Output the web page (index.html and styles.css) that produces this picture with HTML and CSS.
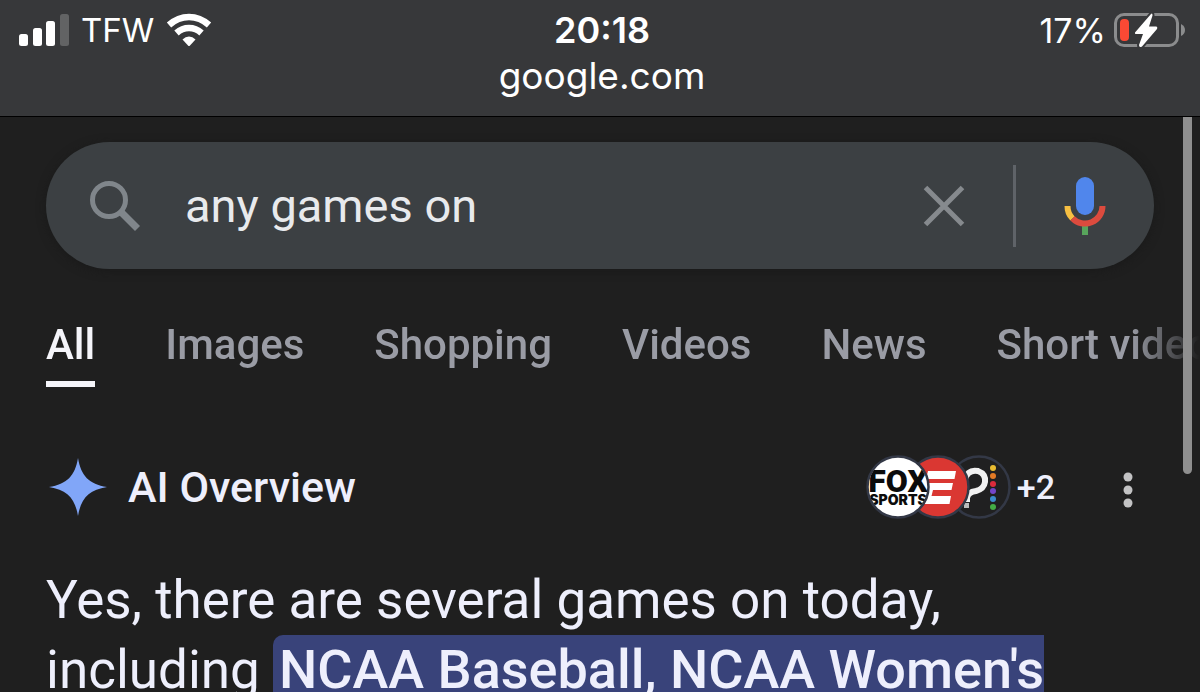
FILE: index.html
```html
<!DOCTYPE html>
<html lang="en">
<head>
<meta charset="utf-8">
<meta name="viewport" content="width=device-width, initial-scale=1">
<title>any games on - Google Search</title>
<link rel="stylesheet" href="styles.css">
</head>
<body>
<header class="browser-bar">
  <div class="status">
    <div class="status-left">
      <svg class="signal" width="50" height="32" viewBox="0 0 50 32" aria-hidden="true">
        <rect x="0" y="20" width="9" height="12" rx="2.5" fill="#fff"/>
        <rect x="14" y="14" width="9" height="18" rx="2.5" fill="#fff"/>
        <rect x="27" y="7" width="9" height="25" rx="2.5" fill="#fff"/>
        <rect x="41" y="0" width="9" height="32" rx="2.5" fill="#626364"/>
      </svg>
      <span class="carrier">TFW</span>
      <svg class="wifi" width="46" height="34" viewBox="0 0 46 34" aria-hidden="true">
        <g fill="none" stroke="#fff" stroke-width="6.500">
          <path d="M3 12Q12 4 23 4t20 8"/>
          <path d="M10.500 20Q16 15 23 15t12.500 5"/>
        </g>
        <path d="M16.500 26.500Q19.500 23.500 23 23.500t6.500 3L24 32.500q-1 1-2 0z" fill="#fff"/>
      </svg>
    </div>
    <time class="clock">20:18</time>
    <div class="status-right">
      <span class="percent">17%</span>
      <svg class="battery" width="71" height="36" viewBox="0 0 71 36" aria-hidden="true">
        <rect x="1.500" y="2.500" width="62" height="31" rx="8.500" fill="none" stroke="#8b8c8d" stroke-width="3"/>
        <rect x="6" y="7" width="9" height="22" rx="4" fill="#fb4934"/>
        <path d="M67 12q4 2 4 6t-4 6z" fill="#8b8c8d"/>
        <path d="M37 2 21 20.500q-.5 1.500 1 1.500h7l-4 11q0 3 3 1.500L43 17q1-2-1-2.500h-7l3.500-11Q38.500.5 37 2z" fill="#fff" stroke="#37383a" stroke-width="4" paint-order="stroke"/>
      </svg>
    </div>
  </div>
  <div class="domain">google.com</div>
</header>
<div class="scrollbar" aria-hidden="true"></div>
<main>
  <form class="search" role="search">
    <svg width="52" height="52" viewBox="0 0 52 52" aria-hidden="true">
      <g fill="none" stroke="#80868b">
        <circle cx="20" cy="20" r="16.500" stroke-width="5"/>
        <path d="M31.500 31.500 48.500 48.500" stroke-width="7"/>
      </g>
    </svg>
    <input class="query" type="text" aria-label="Search" value="any games on">
    <button class="icon-button" type="button" aria-label="Clear">
      <svg width="42" height="42" viewBox="0 0 42 42"><path d="M2.500 2.500l37 37M39.500 2.500l-37 37" stroke="#868a8e" stroke-width="5" fill="none"/></svg>
    </button>
    <span class="divider"></span>
    <button class="icon-button" type="button" aria-label="Search by voice">
      <svg width="42" height="60" viewBox="0 0 42 60">
        <rect x="12" y="1" width="18" height="38" rx="9" fill="#5086ec"/>
        <path d="M18 48h6v11h-6z" fill="#58a55c"/>
        <path d="M3.500 30A17.500 17.500 0 0 0 8.500 42.500" fill="none" stroke="#f6bf42" stroke-width="6"/>
        <path d="M8.500 42.300A17.500 17.500 0 0 0 38.500 30" fill="none" stroke="#dc4b3e" stroke-width="6"/>
      </svg>
    </button>
  </form>
  <nav class="tabs">
    <a class="tab active" href="#">All</a>
    <a class="tab" href="#">Images</a>
    <a class="tab" href="#">Shopping</a>
    <a class="tab" href="#">Videos</a>
    <a class="tab" href="#">News</a>
    <a class="tab" href="#">Short videos</a>
  </nav>
  <section class="overview">
    <div class="overview-head">
      <svg width="62" height="62" viewBox="0 0 62 62" aria-hidden="true">
        <path d="M32 2C35 20 43 28 61 31 43 34 35 42 32 60 29 42 21 34 3 31 21 28 29 20 32 2z" fill="#81a6f8"/>
      </svg>
      <h2 class="title">AI Overview</h2>
      <svg width="146" height="64" viewBox="0 0 146 64" role="img" aria-label="Sources">
        <defs>
          <clipPath id="c1"><circle cx="32" cy="32" r="29.500"/></clipPath>
          <clipPath id="c2"><circle cx="72" cy="32" r="29.500"/></clipPath>
        </defs>
        <circle cx="113" cy="32" r="30.500" fill="#202021" stroke="#333846" stroke-width="2.500"/>
        <path d="M99 24Q102 14 112 16q8 3 7 11-1 7-9 9-8 1-9 7v4" fill="none" stroke="#f1f1f1" stroke-width="6"/>
        <path d="M98 48h5v5h-5z" fill="#bbb"/>
        <circle cx="127" cy="13" r="3" fill="#e8bb31"/>
        <circle cx="127" cy="21" r="3" fill="#e27a25"/>
        <circle cx="127" cy="29" r="3" fill="#dc2b3c"/>
        <circle cx="127" cy="36" r="3" fill="#7445c8"/>
        <circle cx="127" cy="44" r="3" fill="#3c8bcb"/>
        <circle cx="127" cy="52" r="3" fill="#43ad45"/>
        <circle cx="72" cy="32" r="30.500" fill="#da3732" stroke="#333846" stroke-width="2.500"/>
        <g clip-path="url(#c2)" fill="#fff">
          <path d="M62 16h28l-1.500 8H60z"/>
          <path d="M59 28h28l-1.500 7H67l-1.500 6H85l-1.500 8H55z"/>
        </g>
        <circle cx="32" cy="32" r="30.500" fill="#fff" stroke="#333846" stroke-width="2.500"/>
        <g clip-path="url(#c1)" fill="#0b0b0b" text-anchor="middle">
          <text class="fox" x="32" y="37">FOX</text>
          <text class="sports" x="32" y="50">SPORTS</text>
        </g>
      </svg>
      <span class="more-sources">+2</span>
      <button class="icon-button menu" type="button" aria-label="More options">
        <svg width="10" height="36" viewBox="0 0 10 36" fill="#c3c3c4"><circle cx="5" cy="5" r="4.500"/><circle cx="5" cy="18" r="4.500"/><circle cx="5" cy="31" r="4.500"/></svg>
      </button>
    </div>
    <p class="answer">Yes, there are several games on today,<br>including <mark class="highlight">NCAA Baseball, NCAA Women's</mark></p>
  </section>
</main>
</body>
</html>
```
FILE: styles.css
```css
* { box-sizing: border-box; }

body {
  margin: 0;
  height: 100vh;
  overflow: hidden;
  background: #1f1f1f;
  color: #eeeffc;
  font-family: Roboto, "Liberation Sans", sans-serif;
}

.browser-bar {
  padding: 8px 15px 0 19px;
  background: #37383a;
  border-bottom: 1px solid #000;
  color: #fff;
  font-family: Inter, "Liberation Sans", sans-serif;
}

.status {
  display: grid;
  grid-template-columns: 1fr auto 1fr;
  align-items: center;
  height: 44px;
  font-size: 34px;
}

.status-left, .status-right { display: flex; align-items: center; }
.status-left { gap: 12px; }
.status-right { justify-content: flex-end; gap: 8px; }
.carrier { font-size: 33px; }
.clock { font-size: 36px; font-weight: 600; }

.domain {
  padding-bottom: 16px;
  text-align: center;
  font-size: 37px;
  line-height: 48px;
}

.scrollbar {
  position: absolute;
  top: 117px;
  right: 8px;
  width: 9px;
  height: 357px;
  border-radius: 0 0 5px 5px;
  background: #8f8f8f;
  z-index: 2;
}

main { padding: 25px 46px 0; }

.search {
  display: flex;
  align-items: center;
  height: 127px;
  padding: 0 48px 0 43px;
  border-radius: 64px;
  background: #3c4043;
  box-shadow: 0 2px 10px #1a1a1a;
}

.query {
  flex: 1;
  min-width: 0;
  margin: 0 20px 0 44px;
  padding: 0;
  border: 0;
  outline: 0;
  background: transparent;
  color: #e8eaed;
  font: 400 47px/60px Roboto, "Liberation Sans", sans-serif;
}

.icon-button {
  display: flex;
  padding: 0;
  border: 0;
  background: none;
}

.divider {
  width: 3px;
  height: 82px;
  margin: 0 48px;
  background: #5f6368;
}

.tabs {
  display: flex;
  gap: 70px;
  margin-top: 52px;
  margin-right: -46px;
  overflow: hidden;
  white-space: nowrap;
  -webkit-mask-image: linear-gradient(to left, transparent, #000 70px);
  mask-image: linear-gradient(to left, transparent, #000 70px);
}

.tab {
  padding-bottom: 12px;
  border-bottom: 6px solid transparent;
  color: #9a9ca5;
  font-size: 42px;
  font-weight: 500;
  line-height: 48px;
  text-decoration: none;
}

.tab.active { color: #f5f5fa; border-color: #f5f5fa; }

.overview { padding-top: 68px; }

.overview-head {
  display: flex;
  align-items: center;
  height: 64px;
}

.title {
  flex: 1;
  margin: 0 0 0 20px;
  font-size: 43px;
  font-weight: 500;
  line-height: 48px;
}

.fox { font: 900 32px Roboto, sans-serif; }
.sports { font: 900 14px Inter, sans-serif; }

.more-sources {
  margin-left: 5px;
  font-size: 34px;
  font-weight: 500;
}

.menu { margin: 6px 21px 0 68px; }

.answer {
  margin: 47px 0 0;
  font-size: 53px;
  line-height: 69px;
  white-space: nowrap;
}

.highlight {
  padding: 3px 0 4px 6px;
  border-radius: 10px 0 0 10px;
  background: #39437a;
  color: inherit;
  font-size: 54px;
  font-weight: 500;
}
```
